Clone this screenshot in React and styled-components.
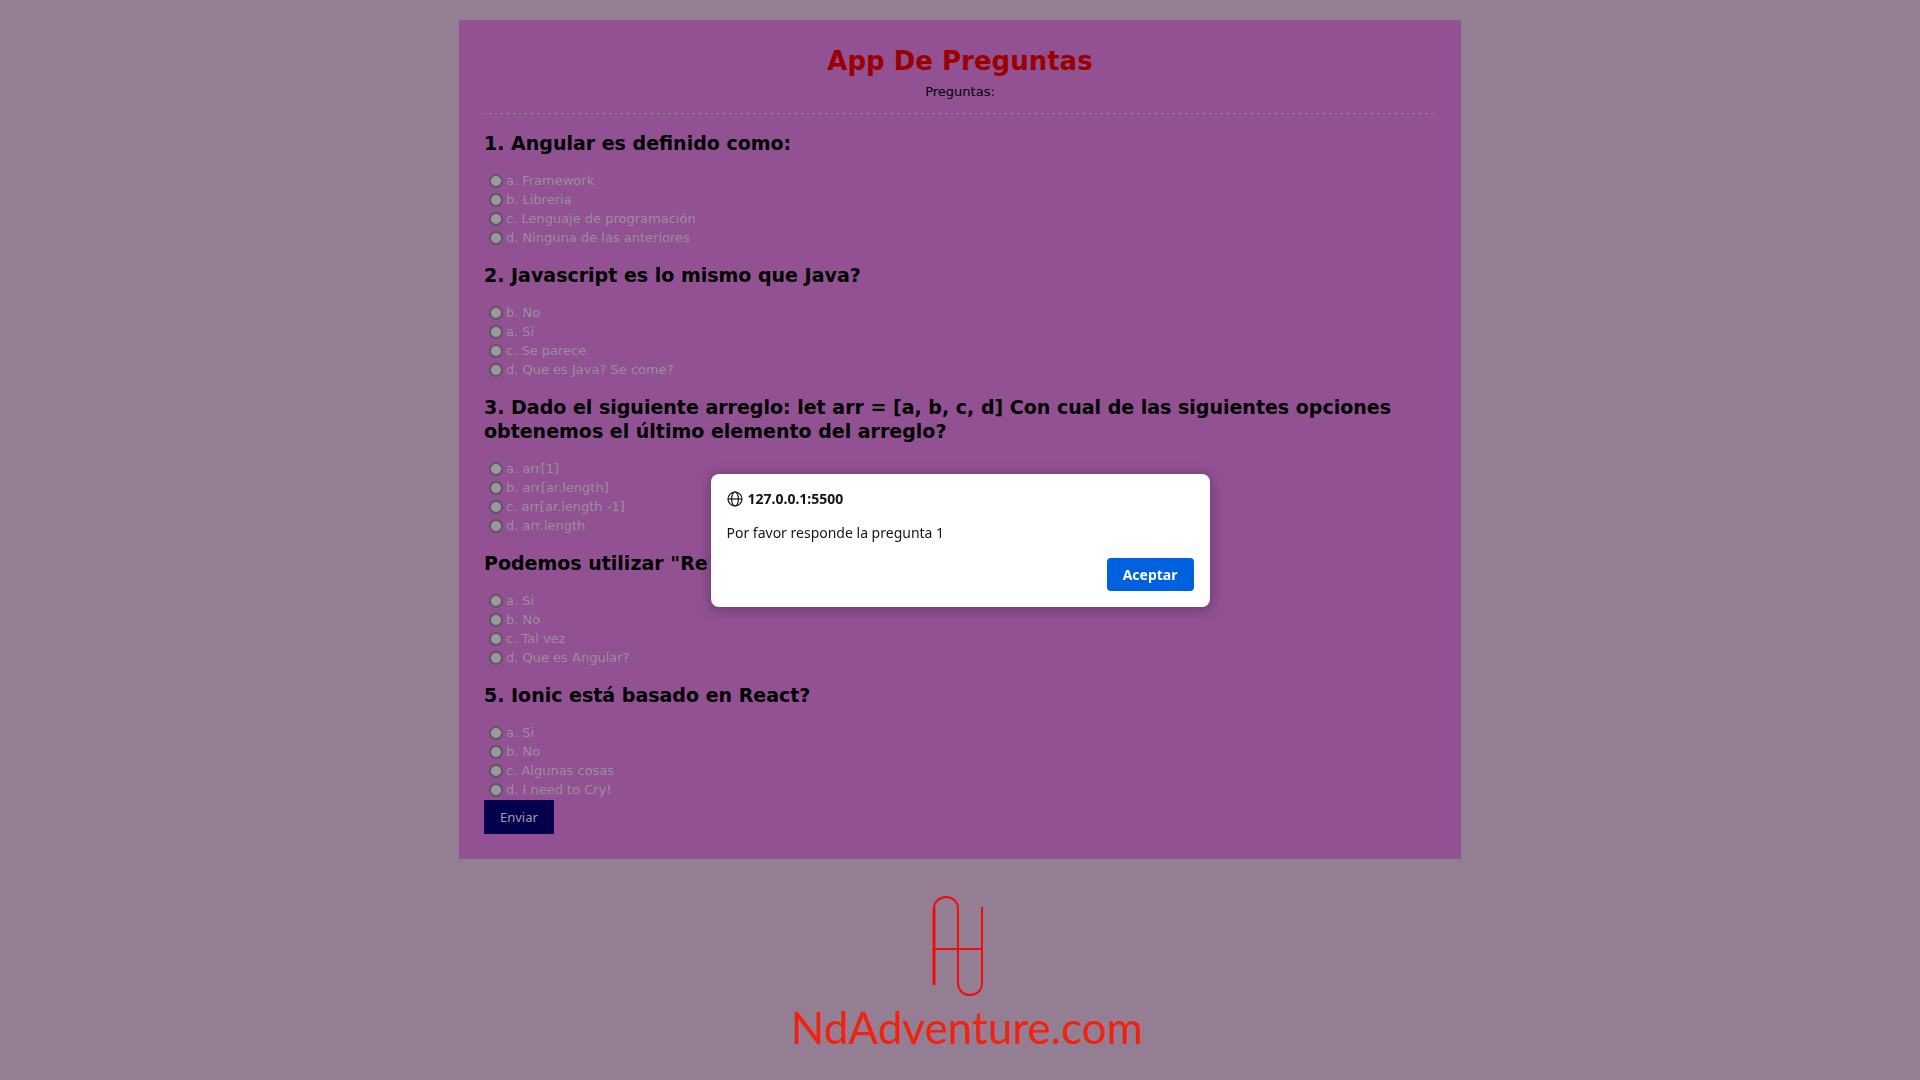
import React from "react";
import styled, { createGlobalStyle } from "styled-components";

const GlobalStyle = createGlobalStyle`
  *, *::before, *::after { box-sizing: border-box; }
  body {
    margin: 0;
    min-height: 100vh;
    background: #937e93;
    font-family: "DejaVu Sans", Verdana, sans-serif;
    font-size: 13px;
    line-height: 16px;
    color: #000;
  }
`;

const Page = styled.div`
  display: flex;
  flex-direction: column;
  align-items: center;
  padding: 20px 16px;
`;

const Panel = styled.main`
  width: 100%;
  max-width: 1002px;
  padding: 25px;
  background: #925193;
`;

const Header = styled.header`
  display: flex;
  flex-direction: column;
  align-items: center;
  gap: 7px;
  padding-bottom: 13px;
`;

const Title = styled.h1`
  margin: 0;
  font-size: 26px;
  line-height: 32px;
  color: #9a0000;
`;

const Subtitle = styled.p`
  margin: 0;
`;

const Divider = styled.hr`
  height: 1px;
  margin: 0 0 1px;
  border: 0;
  background: repeating-linear-gradient(90deg, #989a94 0 1px, transparent 1px 5px, #989a94 5px 6px);
`;

const Question = styled.fieldset`
  min-width: 0;
  margin: 0;
  padding: 0;
  border: 0;
`;

const Prompt = styled.legend`
  padding: 16px 0;
  font-size: 19px;
  font-weight: 700;
  line-height: 24px;
`;

const Option = styled.label`
  display: flex;
  align-items: center;
  gap: 3px;
  height: 19px;
  padding-left: 5px;
  color: #979097;
`;

const Radio = styled.input`
  appearance: none;
  width: 14px;
  height: 14px;
  margin: 0;
  border: 2px solid #5f5566;
  border-radius: 50%;
  background: #9b999c;
`;

const Submit = styled.button`
  display: block;
  margin-top: 1px;
  padding: 9px 16px;
  border: 0;
  background: #04004d;
  color: #a79ca9;
  font: 13px/16px "Noto Sans", sans-serif;
`;

const Brand = styled.footer`
  display: flex;
  flex-direction: column;
  align-items: center;
  padding-top: 36px;
`;

const Mark = styled.svg`
  margin-right: 4px;
`;

const Wordmark = styled.span`
  padding-left: 14px;
  color: #f0230f;
  font: 44px/60px Lato, sans-serif;
`;

const Overlay = styled.div`
  position: fixed;
  inset: 0;
  display: flex;
  align-items: center;
  justify-content: center;
`;

const Dialog = styled.section`
  display: flex;
  flex-direction: column;
  gap: 16px;
  width: 499px;
  padding: 16px;
  border-radius: 8px;
  background: #fff;
  box-shadow: 0 2px 14px rgba(20, 10, 30, 0.35);
  color: #15141a;
  font: 14px/18px "Noto Sans", sans-serif;
`;

const Origin = styled.h2`
  display: flex;
  align-items: center;
  gap: 5px;
  margin: 0;
  font-size: 14px;
  line-height: 18px;
`;

const Message = styled.p`
  margin: 0;
`;

const Accept = styled.button`
  align-self: flex-end;
  padding: 6px 16px;
  border: 0;
  border-radius: 4px;
  background: #0061e0;
  color: #fff;
  font: 700 14px/21px "Noto Sans", sans-serif;
`;

const questions = [
  { text: "1. Angular es definido como:", options: ["a. Framework", "b. Libreria", "c. Lenguaje de programación", "d. Ninguna de las anteriores"] },
  { text: "2. Javascript es lo mismo que Java?", options: ["b. No", "a. Si", "c. Se parece", "d. Que es Java? Se come?"] },
  { text: "3. Dado el siguiente arreglo: let arr = [a, b, c, d] Con cual de las siguientes opciones obtenemos el último elemento del arreglo?", options: ["a. arr[1]", "b. arr[ar.length]", "c. arr[ar.length -1]", "d. arr.length"] },
  { text: "Podemos utilizar \"Re", options: ["a. Si", "b. No", "c. Tal vez", "d. Que es Angular?"] },
  { text: "5. Ionic está basado en React?", options: ["a. Si", "b. No", "c. Algunas cosas", "d. I need to Cry!"] },
];

function GlobeIcon() {
  return (
    <svg width="16" height="16" viewBox="0 0 16 16" fill="none" stroke="#15141a" strokeWidth="1.2" aria-hidden="true">
      <circle cx="8" cy="8" r="7" />
      <ellipse cx="8" cy="8" rx="3.4" ry="7" />
      <path d="M1 8h14" />
    </svg>
  );
}

function BrandMark() {
  return (
    <Mark width="52" height="102" viewBox="0 0 52 102" fill="none" stroke="#f50a0a" strokeWidth="2" aria-hidden="true">
      <path d="M2 14C2 -2 26 -2 26 14V88C26 104 50 104 50 88V12M2 54H50" />
      <path d="M2 90V13" strokeWidth="3" />
    </Mark>
  );
}

export default function App() {
  return (
    <>
      <GlobalStyle />
      <Page>
        <Panel>
          <Header>
            <Title>App De Preguntas</Title>
            <Subtitle>Preguntas:</Subtitle>
          </Header>
          <Divider />
          <form onSubmit={(e) => e.preventDefault()}>
            {questions.map((question, q) => (
              <Question key={question.text}>
                <Prompt>{question.text}</Prompt>
                {question.options.map((option) => (
                  <Option key={option}>
                    <Radio type="radio" name={`p${q + 1}`} value={option} />
                    {option}
                  </Option>
                ))}
              </Question>
            ))}
            <Submit type="submit">Enviar</Submit>
          </form>
        </Panel>
        <Brand>
          <BrandMark />
          <Wordmark>NdAdventure.com</Wordmark>
        </Brand>
      </Page>
      <Overlay>
        <Dialog role="alertdialog" aria-labelledby="origin" aria-describedby="message">
          <Origin id="origin"><GlobeIcon />127.0.0.1:5500</Origin>
          <Message id="message">Por favor responde la pregunta 1</Message>
          <Accept type="button">Aceptar</Accept>
        </Dialog>
      </Overlay>
    </>
  );
}
